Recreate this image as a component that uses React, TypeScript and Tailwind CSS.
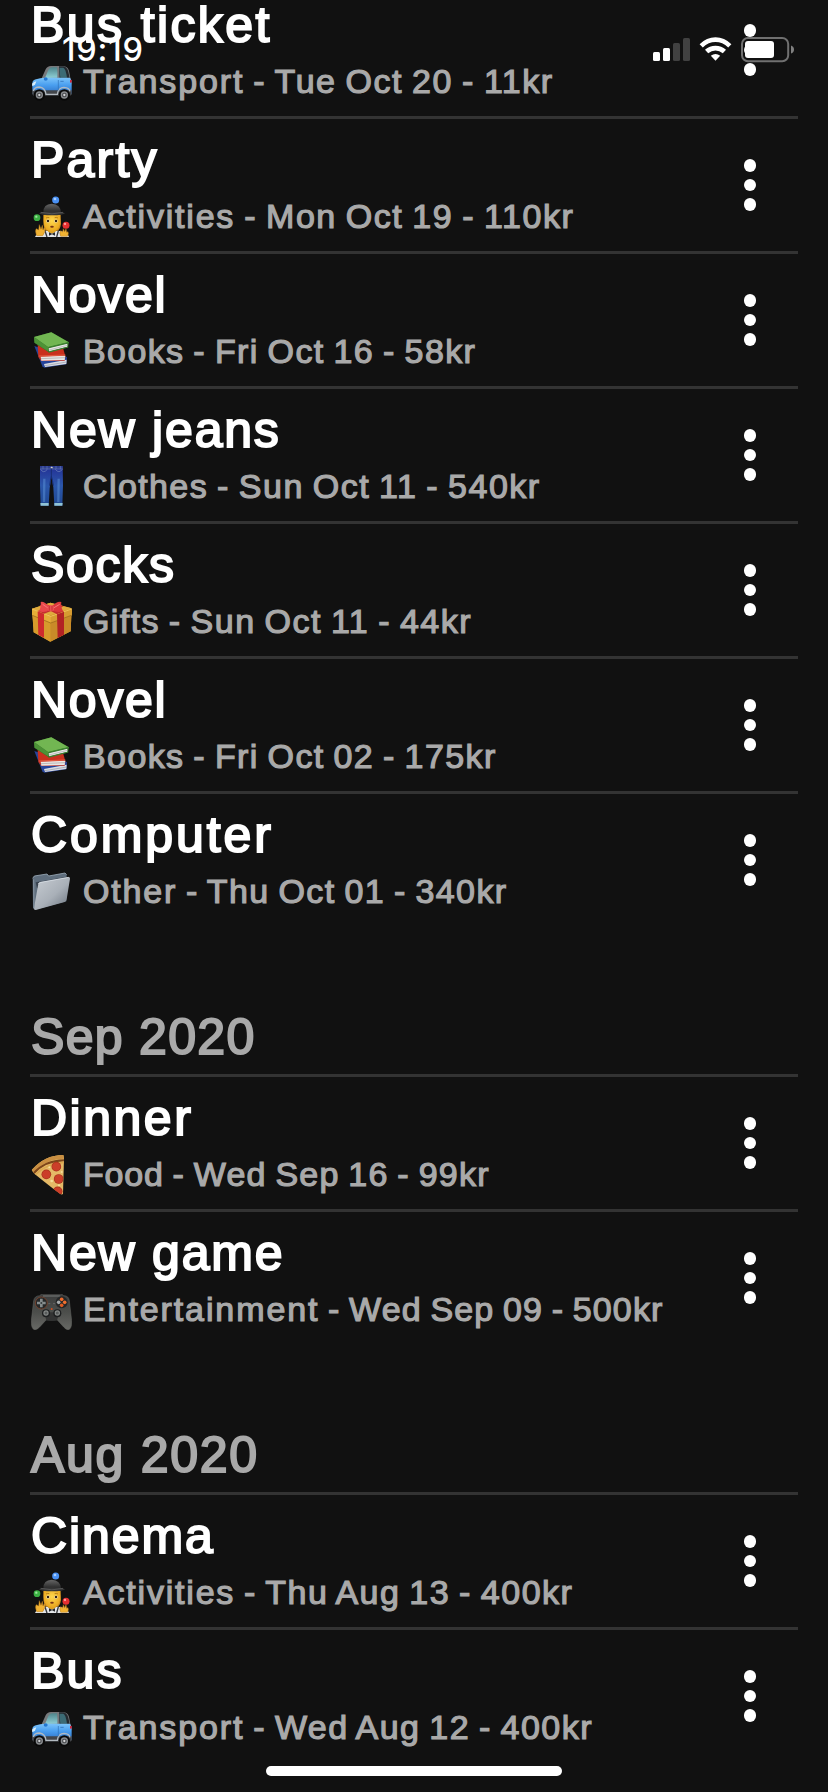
import type { ReactNode } from "react";

type Entry = {
  title: string;
  titleClass: string;
  icon: ReactNode;
  category: string;
  categoryClass: string;
  details: string;
  detailsClass: string;
};

const iconProps = { viewBox: "0 0 123 123", className: "ml-px size-[41px] shrink-0" };

function Car() {
  return (
    <svg {...iconProps}>
      <defs>
        <linearGradient id="carBody" x1="0" y1="0" x2="0" y2="1">
          <stop offset="0" stopColor="#7cc4fa" />
          <stop offset="0.45" stopColor="#4a9ff0" />
          <stop offset="1" stopColor="#2c6fc4" />
        </linearGradient>
        <linearGradient id="carGlass" x1="0" y1="0" x2="0" y2="1">
          <stop offset="0" stopColor="#4f858b" />
          <stop offset="1" stopColor="#8fd0d6" />
        </linearGradient>
      </defs>
      <path d="M30 56 L44 25 Q48 16 60 15 H96 Q111 16 114 30 L119 56 Z" fill="#77797c" />
      <path d="M84 16 H97 Q108 18 112 32 L117 56 H86 Z" fill="#242a30" />
      <path d="M42 51 L52 27 Q55 20 63 19 H78 Q80 36 79 50 Z" fill="url(#carGlass)" />
      <path d="M85 20 H97 Q104 22 108 50 H88 Q86 35 85 20Z" fill="#3c6b75" />
      <path d="M4 66 Q5 57 15 55 Q27 50 42 50 H116 Q123 55 122 72 V99 H4 Z" fill="url(#carBody)" />
      <path d="M3 88 H122 V101 Q120 104 112 104 H8 Q2 103 3 88Z" fill="#43464a" />
      <path d="M7 90 Q10 78 25 78 Q42 79 45 100 H79 Q82 79 99 79 Q115 80 117 91" fill="none" stroke="#b2bac1" strokeWidth="4" />
      <path d="M3 68 Q9 62 16 61 L12 71 L4 76Z" fill="#d8edf8" />
      <rect x="117" y="56" width="5" height="9" rx="2" fill="#d82435" />
      <ellipse cx="44" cy="54" rx="6" ry="5" fill="#2377d0" />
      <path d="M82 57 V88" stroke="#2d70b5" strokeWidth="2" />
      <path d="M88 61 H98" stroke="#2462ac" strokeWidth="2" />
      {[25, 100].map((x) => (
        <g key={x}>
          <circle cx={x} cy="102" r="17" fill="#090909" />
          <circle cx={x} cy="102" r="11" fill="#888b8e" />
          <circle cx={x} cy="102" r="7" fill="#4a4c4f" />
          <circle cx={x} cy="102" r="3.5" fill="#d4d5d7" />
        </g>
      ))}
    </svg>
  );
}

function Juggler() {
  return (
    <svg {...iconProps}>
      <defs>
        <radialGradient id="face" cx="0.5" cy="0.4" r="0.6">
          <stop offset="0" stopColor="#ffd84e" />
          <stop offset="1" stopColor="#e9a51d" />
        </radialGradient>
        <linearGradient id="hat" x1="0" y1="0" x2="0" y2="1">
          <stop offset="0" stopColor="#666" />
          <stop offset="1" stopColor="#242424" />
        </linearGradient>
      </defs>
      <path d="M12 123 Q18 105 45 104 H82 Q110 106 114 123 Z" fill="#e3e5e8" />
      <path d="M42 105 L48 123 M82 105 L77 123" stroke="#34373b" strokeWidth="4" />
      <path d="M37 57 H89 L90 84 Q87 101 80 104 H45 Q35 96 37 57Z" fill="#d0901f" />
      <path d="M52 98 H74 V107 L63 113 L51 107Z" fill="#dda021" />
      <path d="M39 56 Q61 49 87 56 V84 Q83 106 63 107 Q43 106 39 84Z" fill="url(#face)" />
      <circle cx="51" cy="75" r="4.8" fill="#fff" />
      <circle cx="75" cy="75" r="4.8" fill="#fff" />
      <circle cx="51" cy="75" r="3.7" fill="#342315" />
      <circle cx="75" cy="75" r="3.7" fill="#342315" />
      <path d="M45 66 Q50 63 55 65 M71 65 Q76 63 81 66" fill="none" stroke="#98610e" strokeWidth="2" />
      <ellipse cx="63" cy="92" rx="5.5" ry="3" fill="#793513" />
      <path d="M37 49 Q37 24 62 23 Q89 24 90 50 Z" fill="url(#hat)" />
      <ellipse cx="63" cy="52" rx="38" ry="6" fill="#353535" />
      <path d="M29 49 Q63 58 96 49" stroke="#656565" strokeWidth="2" fill="none" />
      <path d="M54 109 L63 113 L72 109 V119 L63 115 L54 119Z" fill="#25282c" />
      <path d="M17 119 Q11 103 16 98 L23 102 L25 86 L30 100 L34 88 L36 102 L41 93 Q45 107 35 119Z" fill="#f0b233" stroke="#b87b1b" strokeWidth="1.5" />
      <path d="M89 121 Q84 109 89 104 L95 108 L97 98 L101 107 L105 98 L107 109 L111 107 Q114 113 109 121Z" fill="#f0b233" stroke="#b87b1b" strokeWidth="1.5" />
      <circle cx="74" cy="12" r="10.5" fill="#4a91f4" />
      <circle cx="18" cy="65" r="10" fill="#3baf43" />
      <circle cx="105" cy="88" r="10.5" fill="#e52f31" />
      <circle cx="72" cy="9" r="4" fill="#a5cdff" />
      <circle cx="16" cy="62" r="3.5" fill="#9ae59a" />
      <circle cx="102" cy="84" r="3.5" fill="#ff9d99" />
    </svg>
  );
}

function Books() {
  return (
    <svg {...iconProps}>
      <path d="M10 45 L88 71 L108 78 L106 100 L40 110 L34 106Z" fill="#26449b" />
      <path d="M39 99 L107 86 L106 99 L42 108Z" fill="#d9dce3" />
      <path d="M42 104 L107 93" stroke="#9299a8" strokeWidth="2" />
      <path d="M20 42 L97 54 L103 76 L101 89 L31 90 L22 78Z" fill="#c9301e" />
      <path d="M29 77 L103 74 L101 87 L31 89Z" fill="#e9e6e4" />
      <path d="M30 83 L102 80" stroke="#a5a2a1" strokeWidth="2" />
      <path d="M24 75 L103 72" stroke="#e35b42" strokeWidth="3" />
      <path d="M9 18 L61 4 L114 34 L111 48 L53 64 L10 35Z" fill="#367629" />
      <path d="M9 18 L61 4 L113 34 L52 49Z" fill="#72b652" />
      <path d="M9 18 L52 49 L51 61 L11 35Z" fill="#4d9237" />
      <path d="M53 52 L109 38 L109 47 L54 61Z" fill="#e8e8e6" />
      <path d="M54 57 L109 43" stroke="#aaa" strokeWidth="2" />
      <path d="M52 49 L114 34 M53 64 L112 48" stroke="#3b822f" strokeWidth="3" />
    </svg>
  );
}

function Jeans() {
  return (
    <svg {...iconProps}>
      <defs>
        <linearGradient id="denim" x1="0" y1="0" x2="0" y2="1">
          <stop offset="0" stopColor="#232f94" />
          <stop offset="0.5" stopColor="#2b57ab" />
          <stop offset="1" stopColor="#1f4790" />
        </linearGradient>
      </defs>
      <path d="M27 0 H95 L96 57 L94 119 H70 L67 64 L61 31 L56 67 L53 119 H29 L27 56Z" fill="url(#denim)" />
      <path d="M27 1 H95 V9 H27Z" fill="#30418d" />
      <path d="M27 9 H95" stroke="#7082b6" strokeWidth="1.5" />
      <path d="M61 3 V30 Q58 43 56 59 M61 30 Q65 43 67 59" stroke="#172d72" strokeWidth="3" fill="none" />
      <path d="M29 10 Q37 24 49 10 M73 10 Q84 24 94 10" stroke="#7187bd" strokeWidth="2" fill="none" />
      <path d="M40 38 L39 108 M83 38 L82 108" stroke="#5b92d7" strokeWidth="7" opacity="0.5" />
      <path d="M28 111 H53 V119 H29Z M70 111 H95 L94 119 H70Z" fill="#91c4d5" />
      <rect x="59" y="2" width="6" height="5" rx="2" fill="#d8d5cb" />
      <path d="M36 0 V10 M48 0 V10 M75 0 V10 M88 0 V10" stroke="#6077bc" strokeWidth="2" />
    </svg>
  );
}

function Gift() {
  return (
    <svg {...iconProps}>
      <path d="M3 23 L58 5 L122 22 L119 91 L58 122 L8 94Z" fill="#dda32d" />
      <path d="M3 23 L58 43 V122 L8 94Z" fill="#d79b2c" />
      <path d="M58 43 L122 23 L119 91 L58 122Z" fill="#c98b28" />
      <path d="M3 23 L58 5 L122 22 L59 43Z" fill="#e0ab3d" />
      <path d="M3 24 L59 46 L122 24 V43 L59 65 L3 42Z" fill="#e6ad38" />
      <path d="M59 46 L122 24 V43 L59 65Z" fill="#d79c31" />
      <path d="M3 24 L59 46 L122 24" fill="none" stroke="#f7d36e" strokeWidth="2" />
      <path d="M4 43 L59 66 L121 43" fill="none" stroke="#956519" strokeWidth="2" />
      <path d="M20 31 L39 38 V110 L22 101Z" fill="#cf2c2d" />
      <path d="M78 40 L99 32 V101 L80 111Z" fill="#b22224" />
      <path d="M20 30 L79 10 L98 16 L39 38Z" fill="#c42f2f" />
      <path d="M25 13 L44 9 L99 31 L78 40Z" fill="#c42c2d" />
      <path d="M57 18 Q36 -2 29 3 Q31 17 24 31 Q42 36 57 26Z" fill="#e8484b" />
      <path d="M60 18 Q79 -1 91 3 Q89 17 96 31 Q76 36 60 26Z" fill="#dc383b" />
      <path d="M35 10 L54 23 M86 10 L64 23" stroke="#f9797a" strokeWidth="3" />
      <rect x="50" y="13" width="19" height="18" rx="6" fill="#ed5053" />
      <path d="M55 15 V29 M63 15 V29" stroke="#b82329" strokeWidth="2" />
    </svg>
  );
}

function Folder() {
  return (
    <svg {...iconProps}>
      <defs>
        <linearGradient id="folderFront" x1="0" y1="0" x2="1" y2="1">
          <stop offset="0" stopColor="#c8cdd3" />
          <stop offset="0.55" stopColor="#a9b0b8" />
          <stop offset="1" stopColor="#68717c" />
        </linearGradient>
      </defs>
      <path d="M5 22 L10 15 L48 9 L53 15 L102 6 L107 11 L106 91 L12 116 L6 111Z" fill="#5f6e7d" />
      <path d="M5 22 L10 15 L48 9 L53 15 L102 6 L107 11" stroke="#9aa9b7" strokeWidth="2.5" fill="none" />
      <path d="M14 34 L54 27 L107 17 V35 L18 52Z" fill="#39434f" />
      <path d="M22 38 Q24 34 29 33 L113 18 Q118 18 117 23 L107 85 Q106 91 101 93 L14 117 Q8 117 9 111Z" fill="url(#folderFront)" />
      <path d="M22 39 Q24 35 29 34 L113 19" stroke="#e3eaf0" strokeWidth="2" fill="none" />
      <path d="M8 25 L9 112" stroke="#8996a3" strokeWidth="3" />
    </svg>
  );
}

function Pizza() {
  return (
    <svg {...iconProps}>
      <defs>
        <clipPath id="slice">
          <path d="M2 48 Q41 3 97 3 L99 12 L96 119 L93 122 Q83 118 10 59Z" />
        </clipPath>
      </defs>
      <g clipPath="url(#slice)">
        <rect width="123" height="123" fill="#e5b967" />
        <path d="M1 51 Q40 6 101 6" fill="none" stroke="#c98f42" strokeWidth="17" />
        <path d="M8 58 Q42 20 100 19" fill="none" stroke="#7d451a" strokeWidth="6" />
        <path d="M14 61 Q43 30 99 25" fill="none" stroke="#dba850" strokeWidth="5" />
        {[[76, 38], [46, 61], [83, 75], [80, 112]].map(([x, y]) => (
          <g key={y}>
            <circle cx={x} cy={y} r="14.5" fill="#a8341c" />
            <circle cx={x} cy={y} r="12.5" fill="#cb3e29" />
          </g>
        ))}
        <g fill="#f6df9d">
          <circle cx="55" cy="40" r="3" />
          <circle cx="62" cy="81" r="4" />
          <circle cx="92" cy="54" r="3" />
          <circle cx="84" cy="94" r="3" />
        </g>
      </g>
    </svg>
  );
}

function Gamepad() {
  return (
    <svg {...iconProps}>
      <defs>
        <linearGradient id="pad" x1="0" y1="0" x2="0" y2="1">
          <stop offset="0" stopColor="#3c3d3d" />
          <stop offset="0.5" stopColor="#4c4e4b" />
          <stop offset="1" stopColor="#686965" />
        </linearGradient>
      </defs>
      <path d="M26 20 Q29 15 36 17 H88 Q95 15 98 20 Q113 20 115 35 L122 95 Q123 119 113 122 Q106 124 98 114 L79 93 H45 L26 114 Q17 124 10 122 Q0 119 1 94 L8 35 Q10 21 26 20Z" fill="url(#pad)" stroke="#666864" strokeWidth="1.5" />
      <path d="M45 92 Q62 100 79 92 L83 70 H41Z" fill="#333434" />
      <path d="M36 21 H88" stroke="#777a79" strokeWidth="3" />
      <circle cx="31" cy="42" r="18" fill="#262829" stroke="#7c452d" strokeWidth="2.5" />
      <path d="M31 29 V55 M18 42 H44" stroke="#858c8d" strokeWidth="8" />
      <circle cx="31" cy="42" r="3" fill="#373b3c" />
      <circle cx="92" cy="40" r="18" fill="#242728" />
      <circle cx="92" cy="31" r="5.5" fill="#ef6b2c" />
      <circle cx="101" cy="40" r="5.5" fill="#f1702f" />
      <circle cx="92" cy="49" r="5.5" fill="#df5d24" />
      <circle cx="83" cy="40" r="5.5" fill="#a7abac" />
      {[45, 79].map((x) => (
        <g key={x}>
          <circle cx={x} cy="73" r="12" fill="#1c1e1f" />
          <circle cx={x} cy="72" r="8" fill="#838786" />
          <circle cx={x} cy="72" r="4.5" fill="#575b5b" />
        </g>
      ))}
      <circle cx="62" cy="60" r="3" fill="#d24f20" />
      <path d="M52 44 H58 M66 44 H72" stroke="#777" strokeWidth="2" />
    </svg>
  );
}

const october: Entry[] = [
  { title: "Bus ticket", titleClass: "tracking-[2.4px]", icon: <Car />, category: "Transport", categoryClass: "tracking-[1.9px]", details: " - Tue Oct 20 - 11kr", detailsClass: "tracking-[1.55px]" },
  { title: "Party", titleClass: "tracking-[2.2px]", icon: <Juggler />, category: "Activities", categoryClass: "tracking-[1.8px]", details: " - Mon Oct 19 - 110kr", detailsClass: "tracking-[1.55px]" },
  { title: "Novel", titleClass: "tracking-[1.7px]", icon: <Books />, category: "Books", categoryClass: "tracking-[1.4px]", details: " - Fri Oct 16 - 58kr", detailsClass: "tracking-[1.4px]" },
  { title: "New jeans", titleClass: "tracking-[1.8px]", icon: <Jeans />, category: "Clothes", categoryClass: "tracking-[1.4px]", details: " - Sun Oct 11 - 540kr", detailsClass: "tracking-[1.5px]" },
  { title: "Socks", titleClass: "tracking-[1.7px]", icon: <Gift />, category: "Gifts", categoryClass: "tracking-[1.4px]", details: " - Sun Oct 11 - 44kr", detailsClass: "tracking-[1.5px]" },
  { title: "Novel", titleClass: "tracking-[1.7px]", icon: <Books />, category: "Books", categoryClass: "tracking-[1.4px]", details: " - Fri Oct 02 - 175kr", detailsClass: "tracking-[1.4px]" },
  { title: "Computer", titleClass: "tracking-[2.9px]", icon: <Folder />, category: "Other", categoryClass: "tracking-[1.8px]", details: " - Thu Oct 01 - 340kr", detailsClass: "tracking-[1.4px]" },
];

const september: Entry[] = [
  { title: "Dinner", titleClass: "tracking-[2.5px]", icon: <Pizza />, category: "Food", categoryClass: "tracking-[0.8px]", details: " - Wed Sep 16 - 99kr", detailsClass: "tracking-[1.25px]" },
  { title: "New game", titleClass: "tracking-[1.8px]", icon: <Gamepad />, category: "Entertainment", categoryClass: "tracking-[1.9px]", details: " - Wed Sep 09 - 500kr", detailsClass: "tracking-[1.15px]" },
];

const august: Entry[] = [
  { title: "Cinema", titleClass: "tracking-[1.9px]", icon: <Juggler />, category: "Activities", categoryClass: "tracking-[1.8px]", details: " - Thu Aug 13 - 400kr", detailsClass: "tracking-[1.5px]" },
  { title: "Bus", titleClass: "tracking-[2.2px]", icon: <Car />, category: "Transport", categoryClass: "tracking-[1.9px]", details: " - Wed Aug 12 - 400kr", detailsClass: "tracking-[1.45px]" },
];

function Row({ entry }: { entry: Entry }) {
  return (
    <li className="box-content flex h-[132px] justify-between">
      <div className="pt-4">
        <h3 className={`ml-px text-[50px] leading-[50px] text-white [-webkit-text-stroke:2px_white] ${entry.titleClass}`}>{entry.title}</h3>
        <div className="mt-[11px] flex h-[41px] items-center gap-[11px]">
          {entry.icon}
          <p className="text-[34px] leading-[41px] whitespace-pre text-[#a9a9a9] [-webkit-text-stroke:1.2px_#a9a9a9]">
            <span className={entry.categoryClass}>{entry.category}</span>
            <span className={`[word-spacing:-2px] ${entry.detailsClass}`}>{entry.details}</span>
          </p>
        </div>
      </div>
      <button aria-label="Options" className="mr-[42px] flex flex-col items-center justify-center gap-[7px]">
        <span className="size-[12.5px] rounded-full bg-white" />
        <span className="size-[12.5px] rounded-full bg-white" />
        <span className="size-[12.5px] rounded-full bg-white" />
      </button>
    </li>
  );
}

function Month({ label, labelClass, entries }: { label?: string; labelClass?: string; entries: Entry[] }) {
  return (
    <section>
      {label && (
        <h2 className={`flex h-[151px] items-end border-b-[3px] border-[#333] pb-[12px] pl-px text-[50px] leading-[50px] text-[#a9a9a9] [-webkit-text-stroke:2px_#a9a9a9] ${labelClass}`}>
          {label}
        </h2>
      )}
      <ul className="divide-y-[3px] divide-[#333]">
        {entries.map((entry, i) => (
          <Row key={i} entry={entry} />
        ))}
      </ul>
    </section>
  );
}

function StatusBar() {
  return (
    <header className="absolute inset-x-0 top-0 flex h-[98px] items-center justify-between pr-[33px] pl-[62px]">
      <time className="pt-[2px] font-[Inter,sans-serif] text-[32.5px] leading-[40px] font-medium tracking-[0.8px] text-white">19:19</time>
      <svg viewBox="0 0 142 28" className="h-[28px] w-[142px] text-white" fill="currentColor">
        <rect x="0" y="17" width="7" height="9" rx="1.5" />
        <rect x="10" y="13" width="7" height="13" rx="1.5" />
        <rect x="20" y="8" width="7" height="18" rx="1.5" fill="#414141" />
        <rect x="30" y="3" width="7" height="23" rx="1.5" fill="#414141" />
        <path d="M46.6 9.2 Q53.5 2.2 62.5 2.2 Q71.5 2.2 78.4 9.2 L75.2 12.4 Q69.5 7 62.5 7 Q55.5 7 49.8 12.4Z" />
        <path d="M52 14.8 Q56.5 10.8 62.5 10.8 Q68.5 10.8 73 14.8 L69.8 18.2 Q66.5 15.4 62.5 15.4 Q58.5 15.4 55.2 18.2Z" />
        <path d="M57.8 20.8 Q62.5 17.4 67.2 20.8 L62.5 25.8Z" />
        <rect x="89" y="3" width="46.2" height="23.2" rx="6" fill="none" stroke="#707070" strokeWidth="2" />
        <rect x="92" y="6" width="29" height="17" rx="3" />
        <path d="M138 10.5 Q141 11.5 141 14.5 Q141 17.5 138 18.5Z" fill="#808080" />
      </svg>
    </header>
  );
}

export default function App() {
  return (
    <div className="relative h-[1792px] w-[828px] overflow-hidden bg-[#111] font-['Liberation_Sans',Arial,sans-serif]">
      <main className="-mt-4 flex flex-col px-[30px]">
        <Month entries={october} />
        <Month label="Sep 2020" labelClass="tracking-[1.3px]" entries={september} />
        <Month label="Aug 2020" labelClass="tracking-[1.7px]" entries={august} />
      </main>
      <StatusBar />
      <div className="absolute bottom-4 left-[266px] h-[10px] w-[296px] rounded-full bg-white" />
    </div>
  );
}
